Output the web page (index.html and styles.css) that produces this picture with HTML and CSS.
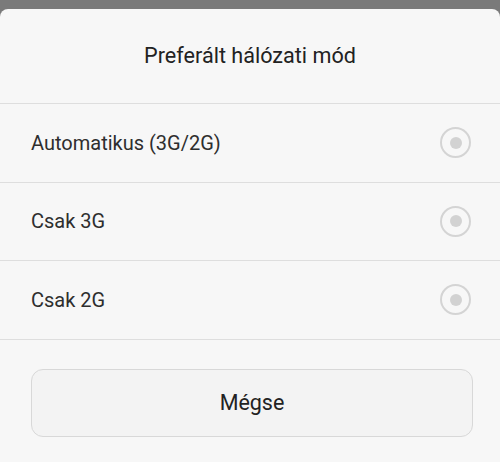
FILE: index.html
```html
<!DOCTYPE html>
<html lang="hu">
<head>
    <meta charset="UTF-8">
    <meta name="viewport" content="width=device-width, initial-scale=1.0">
    <title>Preferált hálózati mód</title>
    <link rel="stylesheet" href="styles.css">
</head>
<body>
    <div class="dialog">
        <header class="dialog-title">Preferált hálózati mód</header>
        <ul class="options">
            <li class="option">
                <span>Automatikus (3G/2G)</span>
                <span class="radio"></span>
            </li>
            <li class="option">
                <span>Csak 3G</span>
                <span class="radio"></span>
            </li>
            <li class="option">
                <span>Csak 2G</span>
                <span class="radio"></span>
            </li>
        </ul>
        <div class="actions">
            <button type="button" class="cancel">Mégse</button>
        </div>
    </div>
</body>
</html>
```

FILE: styles.css
```css
body {
    font-family: Roboto, 'Noto Sans', sans-serif;
    margin: 0;
    padding: 0;
    background-color: #7a7a7a;
    height: 462px;
    overflow: hidden;
}

.dialog {
    margin-top: 9px;
    height: 453px;
    background-color: #f7f7f7;
    border-radius: 8px 8px 0 0;
    display: flex;
    flex-direction: column;
}

.dialog-title {
    height: 95px;
    box-sizing: border-box;
    border-bottom: 1px solid #dedede;
    display: flex;
    align-items: center;
    justify-content: center;
    font-size: 21.6px;
    color: #222;
    padding-bottom: 1px;
}

.options {
    list-style: none;
    margin: 0;
    padding: 0;
}

.option {
    height: 78.5px;
    box-sizing: border-box;
    border-bottom: 1px solid #dedede;
    display: flex;
    align-items: center;
    justify-content: space-between;
    padding: 0 29px 0 31px;
    font-size: 20px;
    color: #2e2e2e;
}

.radio {
    width: 31px;
    height: 31px;
    box-sizing: border-box;
    border: 2px solid #d4d4d4;
    border-radius: 50%;
    display: flex;
    align-items: center;
    justify-content: center;
}

.radio::after {
    content: "";
    width: 12px;
    height: 12px;
    border-radius: 50%;
    background-color: #d2d2d2;
}

.actions {
    padding: 29px 27px 0 31px;
}

.cancel {
    width: 100%;
    height: 68px;
    font-family: inherit;
    font-size: 21.5px;
    color: #222;
    background-color: #f3f3f3;
    border: 1.5px solid #d8d8d8;
    border-radius: 12px;
}
```
